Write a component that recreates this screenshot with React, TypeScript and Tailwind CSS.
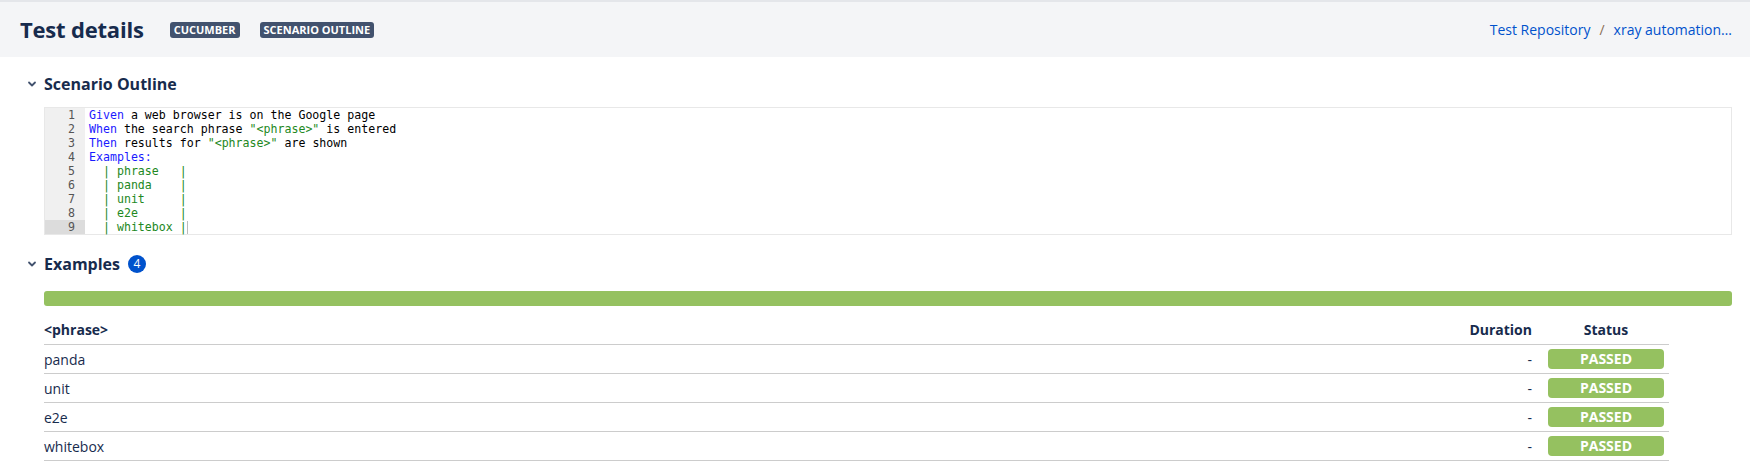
import React from "react";

const codeLines: React.ReactNode[] = [
  <>
    <span className="text-[#1a1aff]">Given</span> a web browser is on the Google page
  </>,
  <>
    <span className="text-[#1a1aff]">When</span> the search phrase{" "}
    <span className="text-[#228822]">"&lt;phrase&gt;"</span> is entered
  </>,
  <>
    <span className="text-[#1a1aff]">Then</span> results for{" "}
    <span className="text-[#228822]">"&lt;phrase&gt;"</span> are shown
  </>,
  <span className="text-[#1a1aff]">Examples:</span>,
  <>
    {"  "}
    <span className="text-[#228822]">| phrase   |</span>
  </>,
  <>
    {"  "}
    <span className="text-[#228822]">| panda    |</span>
  </>,
  <>
    {"  "}
    <span className="text-[#228822]">| unit     |</span>
  </>,
  <>
    {"  "}
    <span className="text-[#228822]">| e2e      |</span>
  </>,
  <>
    {"  "}
    <span className="text-[#228822]">| whitebox |</span>
    <span className="inline-block w-px h-[13px] bg-[#bbbbbb] align-middle" />
  </>,
];

const examples = ["panda", "unit", "e2e", "whitebox"];

// small grey chevron used by collapsible sections
const Chevron = () => (
  <svg width="12" height="12" viewBox="0 0 12 12" className="text-[#42526e]">
    <path
      d="M3 4.5 L6 7.5 L9 4.5"
      fill="none"
      stroke="currentColor"
      strokeWidth="1.8"
      strokeLinecap="round"
      strokeLinejoin="round"
    />
  </svg>
);

const Badge = ({ label }: { label: string }) => (
  <span className="inline-flex items-center h-[16px] px-[4px] rounded-[3px] bg-[#42526e] text-white text-[11px] font-bold leading-none">
    {label}
  </span>
);

const App = () => {
  return (
    <div className="w-full min-h-[474px] bg-white text-[#172b4d] font-['Open_Sans',sans-serif]">
      {/* header */}
      <div className="h-[57px] bg-[#f4f5f7] border-t-2 border-[#e4e6ea] flex items-center justify-between pl-[20px] pr-[18px]">
        <div className="flex items-center">
          <h1 className="text-[22px] font-bold leading-none tracking-[-0.2px] mr-[26px] pb-[1px]">
            Test details
          </h1>
          <div className="flex items-center gap-[20px]">
            <Badge label="CUCUMBER" />
            <Badge label="SCENARIO OUTLINE" />
          </div>
        </div>
        <div className="flex items-center text-[14px] leading-none">
          <a className="text-[#0052cc]">Test Repository</a>
          <span className="mx-[9px] text-[#8a6d55]">/</span>
          <a className="text-[#0052cc]">xray automation…</a>
        </div>
      </div>

      <div className="pl-[19px] pr-[18px]">
        {/* scenario outline section */}
        <div className="flex items-center h-[24px] mt-[15px]">
          <span className="w-[25px] flex justify-center">
            <Chevron />
          </span>
          <h2 className="text-[16px] font-bold">Scenario Outline</h2>
        </div>
        <div className="ml-[25px] mt-[11px] border border-[#e8e8e8] flex font-['DejaVu_Sans_Mono',monospace] text-[11.6px] leading-[14px]">
          <div className="w-[40px] bg-[#f0f0f0] text-[#555] text-right">
            {codeLines.map((_, i) => (
              <div
                key={i}
                className={`h-[14px] pr-[10px] ${i === 8 ? "bg-[#dcdcdc]" : ""}`}
              >
                {i + 1}
              </div>
            ))}
          </div>
          <div className="flex-1 pl-[4px] text-black whitespace-pre">
            {codeLines.map((line, i) => (
              <div key={i} className="h-[14px]">
                {line}
              </div>
            ))}
          </div>
        </div>

        {/* examples section */}
        <div className="flex items-center h-[24px] mt-[17px]">
          <span className="w-[25px] flex justify-center">
            <Chevron />
          </span>
          <h2 className="text-[16px] font-bold">Examples</h2>
          <span className="ml-[8px] w-[18px] h-[18px] rounded-full bg-[#0052cc] text-white text-[12px] flex items-center justify-center leading-none">
            4
          </span>
        </div>
        <div className="ml-[25px] mt-[15px] h-[15px] rounded-[3px] bg-[#95c160]" />

        <div className="ml-[25px] mt-[9px] w-[1625px] text-[14px]">
          <div className="flex items-center h-[30px] border-b border-[#cccccc] font-bold">
            <div className="flex-1">&lt;phrase&gt;</div>
            <div className="text-right">Duration</div>
            <div className="w-[137px] pl-[16px] pr-[5px] text-center">Status</div>
          </div>
          {examples.map((ex) => (
            <div
              key={ex}
              className="flex items-center h-[29px] border-b border-[#cccccc]"
            >
              <div className="flex-1">{ex}</div>
              <div className="text-right">-</div>
              <div className="w-[137px] pl-[16px] pr-[5px]">
                <div className="h-[20px] rounded-[4px] bg-[#95c160] text-white font-bold text-[14px] flex items-center justify-center leading-none">
                  PASSED
                </div>
              </div>
            </div>
          ))}
        </div>
      </div>
    </div>
  );
};

export default App;
